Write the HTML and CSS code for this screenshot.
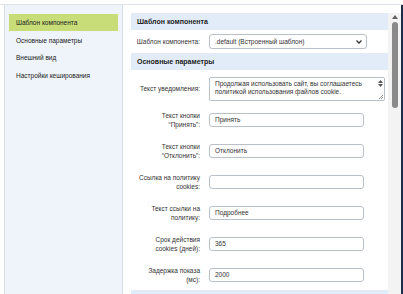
FILE: index.html
```html
<!DOCTYPE html>
<html lang="ru">
<head>
    <meta charset="UTF-8">
    <title>Параметры компонента</title>
    <link rel="stylesheet" href="styles.css">
</head>
<body>
    <div class="frame">
        <aside class="sidebar">
            <div class="tab active">Шаблон компонента</div>
            <div class="tab">Основные параметры</div>
            <div class="tab">Внешний вид</div>
            <div class="tab">Настройки кеширования</div>
        </aside>

        <main class="main">
            <div class="content">
                <div class="section-title">Шаблон компонента</div>
                <div class="row row-select">
                    <div class="label">Шаблон компонента:</div>
                    <div class="select">
                        <span>.default (Встроенный шаблон)</span>
                        <svg width="6" height="4" viewBox="0 0 6 4"><path d="M0.5 0.5 L3 3 L5.5 0.5" fill="none" stroke="#333" stroke-width="1.3"/></svg>
                    </div>
                </div>

                <div class="section-title">Основные параметры</div>
                <div class="rows">
                    <div class="row">
                        <div class="label">Текст уведомления:</div>
                        <div class="textarea">
                            <div class="textarea-text">Продолжая использовать сайт, вы соглашаетесь политикой использования файлов cookie.</div>
                            <div class="textarea-bar">
                                <svg width="5" height="3" viewBox="0 0 5 3"><path d="M0 3 L2.5 0 L5 3 Z" fill="#555"/></svg>
                                <svg width="5" height="3" viewBox="0 0 5 3"><path d="M0 0 L2.5 3 L5 0 Z" fill="#555"/></svg>
                                <svg class="grip" width="5" height="5" viewBox="0 0 5 5"><path d="M5 1 L1 5 M5 3 L3 5" stroke="#777" stroke-width="0.8"/></svg>
                            </div>
                        </div>
                    </div>
                    <div class="row">
                        <div class="label">Текст кнопки<br>“Принять”:</div>
                        <div class="input">Принять</div>
                    </div>
                    <div class="row">
                        <div class="label">Текст кнопки<br>“Отклонить”:</div>
                        <div class="input">Отклонить</div>
                    </div>
                    <div class="row">
                        <div class="label">Ссылка на политику<br>cookies:</div>
                        <div class="input"></div>
                    </div>
                    <div class="row">
                        <div class="label">Текст ссылки на<br>политику:</div>
                        <div class="input">Подробнее</div>
                    </div>
                    <div class="row">
                        <div class="label">Срок действия<br>cookies (дней):</div>
                        <div class="input">365</div>
                    </div>
                    <div class="row">
                        <div class="label">Задержка показа<br>(мс):</div>
                        <div class="input">2000</div>
                    </div>
                </div>

                <div class="section-title">Внешний вид</div>
            </div>

            <div class="scrollbar">
                <svg width="6" height="4" viewBox="0 0 6 4"><path d="M0 4 L3 0 L6 4 Z" fill="#606060"/></svg>
                <div class="thumb"></div>
            </div>
        </main>
    </div>
</body>
</html>
```

FILE: styles.css
```css
* {
    margin: 0;
    padding: 0;
    box-sizing: border-box;
}

body {
    font-family: 'Liberation Sans', Arial, sans-serif;
    font-size: 6.5px;
    color: #333;
    background: #fff;
    overflow: hidden;
}

.frame {
    display: flex;
    margin-top: 4px;
    padding-left: 4px;
    height: 290px;
    border-top: 1px solid #dfe4ea;
    overflow: hidden;
}

.sidebar {
    width: 119px;
    flex-shrink: 0;
    background: #eef4fa;
    border-left: 1px solid #d6dee7;
    border-right: 1px solid #d6dee7;
    padding: 9px 4px 0;
    display: flex;
    flex-direction: column;
    gap: 0.5px;
}

.tab {
    height: 17px;
    line-height: 17px;
    padding-left: 7px;
    color: #222;
    white-space: nowrap;
}

.tab.active {
    background: #c8dc78;
}

.main {
    flex: 1;
    display: flex;
    padding: 8px 0 0 8px;
    border-right: 2px solid #1b2b4b;
}

.content {
    flex: 1;
}

.section-title {
    height: 17px;
    line-height: 17px;
    padding-left: 6px;
    background: #e1ecf8;
    font-size: 7px;
    font-weight: bold;
    color: #222;
}

.rows {
    padding-top: 3px;
}

.row {
    display: grid;
    grid-template-columns: 69px 1fr;
    column-gap: 9px;
    align-items: center;
    height: 31px;
}

.row-select {
    height: 23px;
}

.label {
    text-align: right;
    line-height: 9px;
    color: #333;
}

.input {
    width: 155px;
    height: 14px;
    line-height: 12px;
    padding-left: 5px;
    border: 1px solid #b9c0c8;
    border-radius: 3px;
    background: #fff;
}

.select {
    width: 158px;
    height: 15px;
    display: flex;
    align-items: center;
    justify-content: space-between;
    padding: 0 4px 0 5px;
    border: 1px solid #b9c0c8;
    border-radius: 3px;
}

.textarea {
    width: 176px;
    height: 24px;
    display: flex;
    border: 1px solid #b9c0c8;
    border-radius: 2px;
}

.textarea-text {
    flex: 1;
    padding: 2px 5px;
    line-height: 8px;
}

.textarea-bar {
    width: 8px;
    display: flex;
    flex-direction: column;
    align-items: center;
    padding-top: 2px;
    gap: 1px;
}

.textarea-bar .grip {
    margin-top: auto;
    margin-bottom: 1px;
}

.scrollbar {
    width: 13px;
    background: #f3f3f3;
    display: flex;
    flex-direction: column;
    align-items: center;
    padding-top: 2px;
}

.thumb {
    width: 6px;
    height: 86px;
    margin-top: 3px;
    background: #8a8a8a;
    border-radius: 3px;
}
```
